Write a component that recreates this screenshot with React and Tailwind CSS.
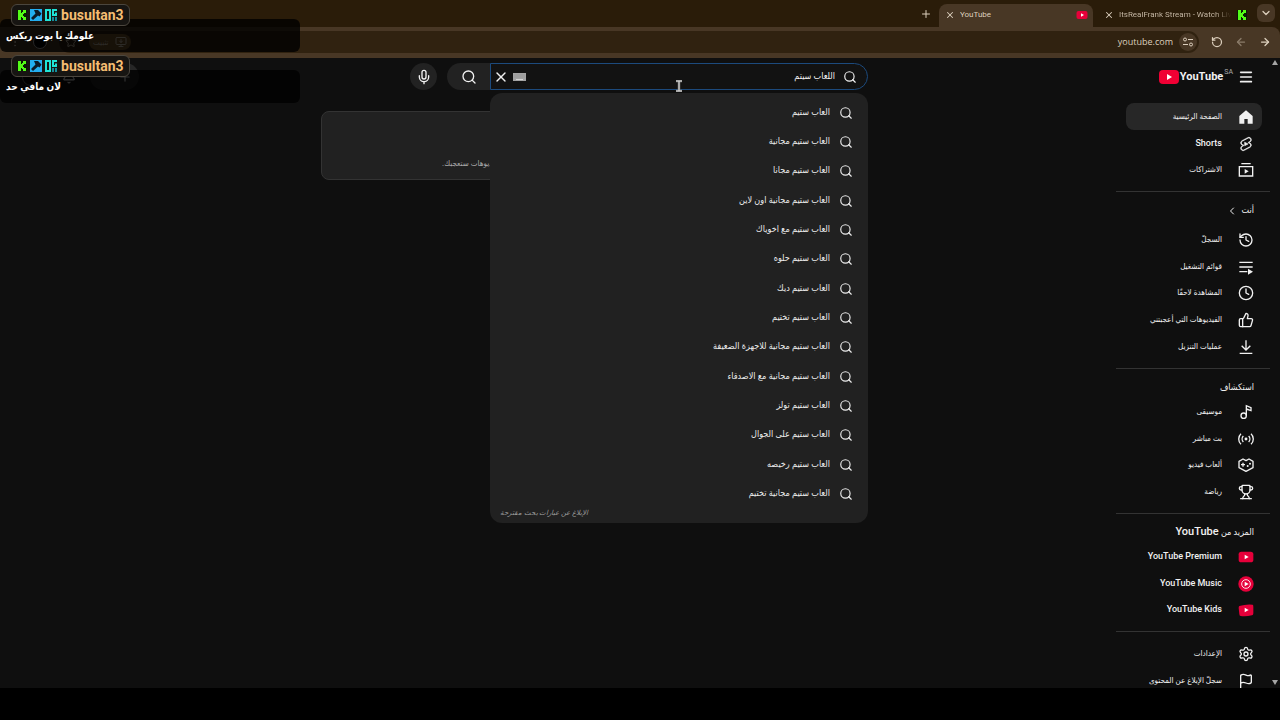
import { useState } from 'react';
import {
  ArrowLeft, ArrowRight, Bell, ChevronDown, ChevronLeft, Clock, Flag, History,
  Menu, Mic, MonitorDown, MoreVertical, Plus, RotateCcw, Search, Settings, Star, ThumbsUp, Trophy, X,
} from 'lucide-react';

const SUGGESTIONS = [
  'العاب ستيم',
  'العاب ستيم مجانية',
  'العاب ستيم مجانا',
  'العاب ستيم مجانية اون لاين',
  'العاب ستيم مع اخوياك',
  'العاب ستيم حلوه',
  'العاب ستيم ديك',
  'العاب ستيم تختيم',
  'العاب ستيم مجانية للاجهزة الضعيفة',
  'العاب ستيم مجانية مع الاصدقاء',
  'العاب ستيم تولز',
  'العاب ستيم على الجوال',
  'العاب ستيم رخيصه',
  'العاب ستيم مجانية تختيم',
];

/* ---------- icons ---------- */

function Svg({ children, className = 'w-4 h-4' }) {
  return (
    <svg viewBox="0 0 24 24" fill="none" stroke="currentColor" strokeWidth="2" className={className} aria-hidden="true">
      {children}
    </svg>
  );
}

function HomeIcon() {
  return (
    <Svg>
      <path d="M12 2 2 10.5V22h7.5v-7h5v7H22V10.5Z" fill="currentColor" stroke="none" />
    </Svg>
  );
}

function ShortsIcon() {
  return (
    <Svg>
      <path
        fill="currentColor"
        strokeWidth="0.9"
        d="M10 14.65v-5.3L15 12l-5 2.65zm7.77-4.33c-.77-.32-1.2-.5-1.2-.5L18 9.06c1.84-.96 2.53-3.23 1.56-5.06s-3.24-2.53-5.07-1.56L6 6.94c-1.29.68-2.07 2.04-2 3.49.07 1.42.93 2.67 2.22 3.25.03.01 1.2.5 1.2.5L6 14.93c-1.83.97-2.53 3.24-1.56 5.07.97 1.83 3.24 2.53 5.07 1.56l8.5-4.5c1.29-.68 2.06-2.04 1.99-3.49-.07-1.42-.94-2.68-2.23-3.25zm-.23 5.86l-8.5 4.5c-1.34.71-3.01.2-3.72-1.14-.71-1.34-.2-3.01 1.14-3.72l2.04-1.08v-1.21l-.69-.28-1.11-.46c-.99-.41-1.65-1.35-1.7-2.41-.05-1.06.52-2.06 1.46-2.56l8.5-4.5c1.34-.71 3.01-.2 3.72 1.14.71 1.34.2 3.01-1.14 3.72L15.5 9.26v1.21l1.8.74c.99.41 1.65 1.35 1.7 2.41.05 1.06-.52 2.06-1.46 2.56z"
      />
    </Svg>
  );
}

function SubscriptionsIcon() {
  return (
    <Svg>
      <path d="M5 2.5h14M2 7h20v14H2z" />
      <path d="m10 10.5 6 3.5-6 3.5z" fill="currentColor" stroke="none" />
    </Svg>
  );
}

function PlaylistIcon() {
  return (
    <Svg>
      <path d="M2 5h20M2 12h20M2 19h12" />
      <path d="m15 14.500 7.500 4.500-7.500 4.500z" fill="currentColor" stroke="none" />
    </Svg>
  );
}

function DownloadIcon() {
  return (
    <Svg>
      <path d="M12 2v14M5.500 10l6.500 6.500 6.500-6.500M2.500 21.500h19" />
    </Svg>
  );
}

function MusicIcon() {
  return (
    <Svg>
      <circle cx="8.500" cy="17.500" r="4" />
      <path d="M12.500 17.500V2.500l7 3v4.500l-7-2.500" />
    </Svg>
  );
}

function LiveIcon() {
  return (
    <Svg>
      <circle cx="12" cy="12" r="2.200" fill="currentColor" stroke="none" />
      <path d="M8 7.500a6.500 6.500 0 0 0 0 9M16 7.500a6.500 6.500 0 0 1 0 9M4.500 4a11 11 0 0 0 0 16M19.500 4a11 11 0 0 1 0 16" />
    </Svg>
  );
}

function GamingIcon() {
  return (
    <Svg>
      <path d="M12 5.500 7.500 3 1.500 6.500V16l10.500 5.500L22.500 16V6.500l-6-3.500z" strokeLinejoin="round" />
      <path d="M7.500 8.500v6M4.500 11.500h6" />
      <circle cx="18" cy="10" r="1.500" fill="currentColor" stroke="none" />
      <circle cx="14.500" cy="13.500" r="1.500" fill="currentColor" stroke="none" />
    </Svg>
  );
}

function PlayBadge({ className = 'w-4 h-4' }) {
  return (
    <svg viewBox="0 0 24 24" className={className} aria-hidden="true">
      <rect x="1" y="4" width="22" height="16" rx="4" fill="#e6003a" />
      <path d="m10 8.500 6 3.500-6 3.500z" fill="#fff" />
    </svg>
  );
}

function MusicBadge() {
  return (
    <svg viewBox="0 0 24 24" className="w-4 h-4" aria-hidden="true">
      <circle cx="12" cy="12" r="11.500" fill="#e6003a" />
      <circle cx="12" cy="12" r="6.500" fill="none" stroke="#fff" strokeWidth="1.300" />
      <path d="m10 8.500 6 3.500-6 3.500z" fill="#fff" />
    </svg>
  );
}

function KidsBadge() {
  return (
    <svg viewBox="0 0 24 24" className="w-4 h-4" aria-hidden="true">
      <path d="M2 6q10-3 20-2 1 0 1 3v10q0 3-2 3-9 2-17 1-2 0-2-3L1 9q0-2 1-3z" fill="#e6003a" />
      <path d="m10 8.500 6 3.500-6 3.500z" fill="#fff" />
    </svg>
  );
}

function KickIcon({ className }) {
  return (
    <svg viewBox="0 0 10 10" fill="#53fc18" shapeRendering="crispEdges" className={className} aria-hidden="true">
      <rect width="10" height="10" fill="#0a1a04" />
      <rect x="1" y="0" width="3" height="10" />
      <rect x="4" y="3" width="2" height="4" />
      <rect x="5" y="2" width="2" height="2" />
      <rect x="6" y="0" width="3" height="3" />
      <rect x="5" y="6" width="2" height="2" />
      <rect x="6" y="7" width="3" height="3" />
    </svg>
  );
}

function ModIcon() {
  return (
    <svg viewBox="0 0 12 12" className="w-3 h-3" aria-hidden="true">
      <rect width="12" height="12" fill="#23aef0" />
      <path d="M4 1h4l3.500 3.500-2 3L8 6.500 3 11 1 9l4.500-4.500z" fill="#0b1a28" />
    </svg>
  );
}

function OgIcon() {
  return (
    <svg viewBox="0 0 12 12" fill="none" stroke="#1fe3d6" strokeWidth="2" className="w-3 h-3" aria-hidden="true">
      <rect x="1" y="1" width="4" height="10" />
      <path d="M12 1H8v5h3V3.500" />
      <path d="M8 8v4M11 8v4" stroke="#158e9c" />
    </svg>
  );
}

function SiteInfoIcon() {
  return (
    <Svg className="w-3 h-3">
      <circle cx="6" cy="7" r="3" />
      <circle cx="18" cy="17" r="3" />
      <path d="M12 7h10M2 17h10" />
    </Svg>
  );
}

function KeyboardIcon() {
  return (
    <svg viewBox="0 0 13 8" className="w-[13px] h-2" aria-hidden="true">
      <rect width="13" height="8" fill="#a3a3a3" />
      <path d="M1 2h11M1 4h11" stroke="#999" />
      <path d="M3 6.500h7" stroke="#d4d4d4" />
    </svg>
  );
}

function TextCursor() {
  return (
    <svg viewBox="0 0 8 12" fill="none" className="absolute top-[17px] left-[185px] z-30 w-2 h-3" aria-hidden="true">
      <path d="M1 1h6M1 11h6M4 1v10" stroke="#777" strokeWidth="2.500" />
      <path d="M1 1h6M1 11h6M4 1v10" stroke="#ddd" />
    </svg>
  );
}

/* ---------- browser chrome ---------- */

function Tab({ title, icon, active }) {
  return (
    <div
      className={`flex items-center gap-[5px] w-[154px] h-[23px] ps-[5px] pe-1.5 pb-1 pt-0.5 rounded-t-lg ${active ? 'bg-[#483725]' : ''}`}
    >
      {icon}
      <button className="flex-1 min-w-0 overflow-hidden whitespace-nowrap text-left" dir="ltr">{title}</button>
      <button aria-label="إغلاق"><X className="w-2.5 h-2.5" strokeWidth={2.5} /></button>
    </div>
  );
}

function TabStrip() {
  return (
    <div className="flex items-end gap-[5px] h-[27px] ps-[5px] text-[8px] text-[#dccfbd] bg-[#2a1c09]">
      <button aria-label="البحث في علامات التبويب" className="flex items-center justify-center w-[18px] h-[18px] mb-[5px] rounded-md bg-[#483725]">
        <ChevronDown className="w-3 h-3" strokeWidth={2.5} />
      </button>
      <Tab
        icon={<KickIcon className="w-[10px] h-[10px] shrink-0" />}
        title={<span className="bg-linear-to-r from-[#cdbfac] from-85% to-[#2a1c09] bg-clip-text text-transparent">ItsRealFrank Stream - Watch Liv</span>}
      />
      <Tab active icon={<PlayBadge className="w-3 h-3 shrink-0" />} title="YouTube" />
      <button aria-label="علامة تبويب جديدة" className="self-center ms-0.5"><Plus className="w-3 h-3" /></button>
    </div>
  );
}

function Toolbar() {
  return (
    <div className="flex items-center gap-3 h-[31px] px-[9px] pb-px rounded-tr-lg bg-[#483725] text-[#dccfbd] font-['Open_Sans','DejaVu_Sans_Condensed',sans-serif]">
      <button aria-label="للأمام"><ArrowRight className="w-3 h-3" strokeWidth={2.5} /></button>
      <button aria-label="رجوع" className="opacity-45"><ArrowLeft className="w-3 h-3" strokeWidth={2.5} /></button>
      <button aria-label="إعادة التحميل"><RotateCcw className="w-3 h-3" strokeWidth={2.5} /></button>
      <div className="flex items-center flex-1 gap-1.5 h-[22px] ps-0.5 pe-1.5 rounded-full bg-[#302210]">
        <button aria-label="معلومات الموقع" className="flex items-center justify-center w-[18px] h-[18px] rounded-full bg-[#483725]">
          <SiteInfoIcon />
        </button>
        <input
          aria-label="شريط العناوين"
          defaultValue="youtube.com"
          className="flex-1 min-w-0 text-[9px] text-right bg-transparent outline-none"
        />
        <button className="flex items-center gap-1.5 h-4 px-1 me-1.5 rounded-full bg-[#72542b] text-[8px]">
          <MonitorDown className="w-3 h-3" />تثبيت
        </button>
        <button aria-label="إشارة مرجعية"><Star className="w-3 h-3" /></button>
      </div>
      <span className="w-3.5 h-3.5 rounded-full bg-black border border-[#bbb]" />
      <button aria-label="المزيد"><MoreVertical className="w-3 h-3" /></button>
    </div>
  );
}

/* ---------- page ---------- */

function SearchBox() {
  const [query, setQuery] = useState('اللعاب سيتم');

  return (
    <div className="flex w-[458px]">
      <div className="relative w-[378px]">
        <div className="flex items-center gap-2 h-[27px] ps-2.5 pe-0.5 rounded-s-full border border-[#1c4a7d] bg-[#121212]">
          <Search className="w-3.5 h-3.5" />
          <input
            aria-label="بحث"
            value={query}
            onChange={(e) => setQuery(e.target.value)}
            className="flex-1 min-w-0 text-[9px] bg-transparent outline-none"
          />
          <div className="flex items-center gap-1">
            <KeyboardIcon />
            <button aria-label="محو" onClick={() => setQuery('')}><X className="w-4 h-4" /></button>
          </div>
        </div>

        {/* suggestions */}
        <div className="absolute top-[30px] inset-x-0 z-20 pt-[5px] rounded-xl bg-[#212121]">
          <ul>
            {SUGGESTIONS.map((text) => (
              <li key={text} className="h-[29px] nth-[3n]:h-[30px]">
                <button className="flex items-center gap-[9px] w-full h-full ps-[15px] text-[9px] text-[#ececec]">
                  <Search className="w-3.5 h-3.5" />
                  {text}
                </button>
              </li>
            ))}
          </ul>
          <a href="#report" className="block h-[15px] pe-2.5 text-left text-[7px] leading-[10px] italic text-[#9a9a9a]">
            الإبلاغ عن عبارات بحث مقترحة
          </a>
        </div>
        <TextCursor />
      </div>
      <button aria-label="بحث" className="flex items-center justify-center w-[43px] h-[27px] rounded-e-full bg-[#222]">
        <Search className="w-4 h-4" />
      </button>
      <button aria-label="البحث بالصوت" className="flex items-center justify-center w-[27px] h-[27px] ms-2.5 rounded-full bg-[#222]">
        <Mic className="w-4 h-4" />
      </button>
    </div>
  );
}

function Masthead() {
  return (
    <header className="flex items-center h-[37px] ps-[18px] pe-[26px]">
      <div className="flex items-center flex-1 gap-[7px]">
        <button aria-label="القائمة"><Menu className="w-4 h-4 -mx-0.5" strokeWidth={2.5} /></button>
        <a href="#home" dir="ltr" className="flex items-center gap-px">
          <svg viewBox="0 0 20 14" className="w-5 h-3.5" aria-hidden="true">
            <rect width="20" height="14" rx="4" fill="#f00034" />
            <path d="m8 4 5 3-5 3z" fill="#fff" />
          </svg>
          <span className="text-[11px] leading-4 font-bold">YouTube</span>
          <span className="self-start text-[7px] leading-[6px] text-[#aaa]">SA</span>
        </a>
      </div>
      <SearchBox />
      <div className="flex items-center justify-end flex-1 gap-3.5">
        <button aria-label="إنشاء" className="flex items-center w-[49px] h-[27px] px-[7px] rounded-full bg-[#272727]">
          <Plus className="w-3.5 h-3.5" />
        </button>
        <button aria-label="الإشعارات" className="me-2"><Bell className="w-3.5 h-3.5" /></button>
        <span className="w-[18px] h-[18px] -me-1 rounded-full bg-black border border-[#666]" />
      </div>
    </header>
  );
}

function NavItem({ icon, label, active, latin }) {
  return (
    <li className="h-[27px] nth-[3n]:h-[26px]">
      <a
        href="#nav"
        className={`flex items-center gap-4 h-full ps-2 rounded-lg ${active ? 'bg-[#272727]' : ''} ${latin ? 'text-[9px] font-medium' : 'text-[8px]'}`}
      >
        {icon}
        {label}
      </a>
    </li>
  );
}

function NavSection({ children }) {
  return <ul className="ps-2 pe-2.5 py-2 border-b border-[#333]">{children}</ul>;
}

function NavHeading({ children }) {
  return <h3 className="flex items-center gap-1 h-[21px] px-4 mt-2 -mb-2 text-[9px]">{children}</h3>;
}

function Sidebar() {
  return (
    <nav className="w-[154px] shrink-0 overflow-hidden">
      <NavSection>
        <NavItem active icon={<HomeIcon />} label="الصفحة الرئيسية" />
        <NavItem latin icon={<ShortsIcon />} label="Shorts" />
        <NavItem icon={<SubscriptionsIcon />} label="الاشتراكات" />
      </NavSection>

      <NavHeading>أنت <ChevronLeft className="w-3 h-3" /></NavHeading>
      <div className="pt-[5px]">
        <NavSection>
          <NavItem icon={<History className="w-4 h-4" />} label="السجلّ" />
          <NavItem icon={<PlaylistIcon />} label="قوائم التشغيل" />
          <NavItem icon={<Clock className="w-4 h-4" />} label="المشاهدة لاحقًا" />
          <NavItem icon={<ThumbsUp className="w-4 h-4" />} label="الفيديوهات التي أعجبتني" />
          <NavItem icon={<DownloadIcon />} label="عمليات التنزيل" />
        </NavSection>
      </div>

      <NavHeading>استكشاف</NavHeading>
      <NavSection>
        <NavItem icon={<MusicIcon />} label="موسيقى" />
        <NavItem icon={<LiveIcon />} label="بث مباشر" />
        <NavItem icon={<GamingIcon />} label="ألعاب فيديو" />
        <NavItem icon={<Trophy className="w-4 h-4" />} label="رياضة" />
      </NavSection>

      <NavHeading><span>المزيد من <b className="text-[11px] font-medium">YouTube</b></span></NavHeading>
      <NavSection>
        <NavItem latin icon={<PlayBadge />} label="YouTube Premium" />
        <NavItem latin icon={<MusicBadge />} label="YouTube Music" />
        <NavItem latin icon={<KidsBadge />} label="YouTube Kids" />
      </NavSection>

      <NavSection>
        <NavItem icon={<Settings className="w-4 h-4" />} label="الإعدادات" />
        <NavItem icon={<Flag className="w-4 h-4" />} label="سجلّ الإبلاغ عن المحتوى" />
      </NavSection>
    </nav>
  );
}

function Scrollbar() {
  return (
    <div className="flex flex-col justify-between items-center w-2.5 py-0.5 text-[#a5a5a5]" aria-hidden="true">
      <svg viewBox="0 0 6 6" fill="currentColor" className="w-1.5 h-1.5"><path d="M3 0 6 5H0z" /></svg>
      <svg viewBox="0 0 6 6" fill="currentColor" className="w-1.5 h-1.5"><path d="M3 5 0 0h6z" /></svg>
    </div>
  );
}

/* ---------- stream chat overlay ---------- */

function ChatMessage({ name, text }) {
  return (
    <div className="relative pt-[15px]">
      <div className="flex items-center h-[33px] px-1.5 rounded-md bg-black/80 text-[10px] font-bold text-white">
        <span dir="rtl">{text}</span>
      </div>
      <div className="absolute top-0 left-[11px] flex items-center gap-[3px] h-[22px] px-[5px] rounded-md border border-[#4b463e] bg-[#171512]">
        <KickIcon className="w-[10px] h-[10px]" />
        <ModIcon />
        <OgIcon />
        <span className="ms-px text-[14px] leading-5 font-bold text-[#f5bd72]">{name}</span>
      </div>
    </div>
  );
}

function ChatOverlay() {
  return (
    <div dir="ltr" className="absolute top-1 left-0 z-40 flex flex-col gap-[3px] w-[300px]">
      <ChatMessage name="busultan3" text="علومك يا بوت ريكس" />
      <ChatMessage name="busultan3" text="لان مافي حد" />
    </div>
  );
}

function App() {
  return (
    <div dir="rtl" className="relative flex flex-col h-screen pb-8 overflow-hidden bg-black text-[#f1f1f1] font-['Roboto','DejaVu_Sans_Condensed','DejaVu_Sans',sans-serif]">
      <div className="bg-[#2a1c09]">
        <TabStrip />
        <Toolbar />
      </div>
      <div className="flex flex-1 min-h-0 bg-[#0f0f0f]">
        <Scrollbar />
        <div className="flex flex-col flex-1 min-w-0">
          <Masthead />
          <div className="flex flex-1 min-h-0">
            <Sidebar />
            <main className="flex-1 min-w-0 pt-4">
              <section className="flex flex-col items-center w-[474px] h-[69px] mx-auto pt-3.5 rounded-lg border border-[#333] bg-[#212121]">
                <h1 className="text-[14px] leading-5 font-bold">ابدأ بالبحث</h1>
                <p className="mt-2.5 text-[8px] leading-4 whitespace-nowrap text-[#aaa]">
                  ابدأ بمشاهدة الفيديوهات لنساعدك في إنشاء خلاصة تتضمّن فيديوهات ستعجبك.
                </p>
              </section>
            </main>
          </div>
        </div>
      </div>
      <ChatOverlay />
    </div>
  );
}

export default App;
